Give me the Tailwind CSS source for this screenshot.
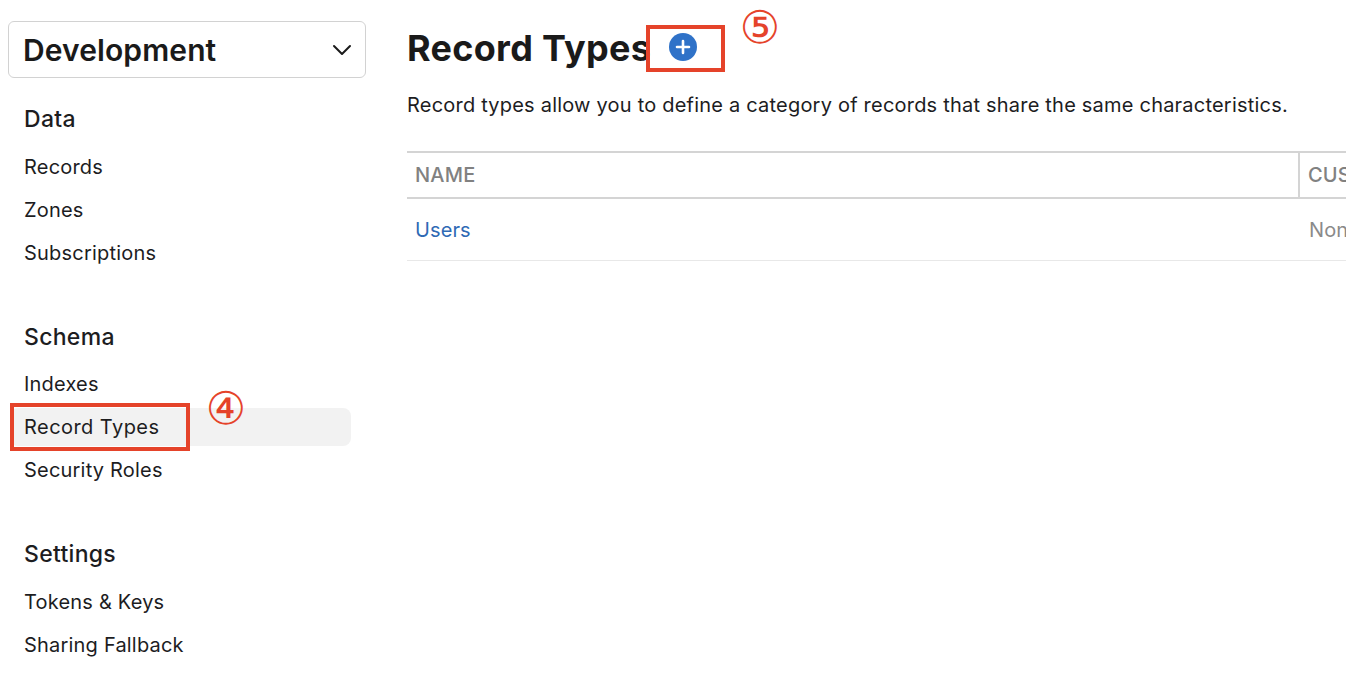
<!DOCTYPE html>
<html lang="en">
<head>
    <meta charset="UTF-8">
    <title>Record Types</title>
    <script src="https://cdn.jsdelivr.net/npm/@tailwindcss/browser@4"></script>
</head>
<body class="bg-white h-[686px] overflow-hidden font-['Inter',sans-serif] text-[#1d1d1f]">
    <div class="relative flex h-[686px] overflow-hidden">
        <!-- Sidebar -->
        <aside class="w-[407px] shrink-0 pl-2 pt-[21px]">
            <div class="flex items-center justify-between w-[358px] h-[57px] border border-[#d2d2d2] rounded-md pl-[14px] pr-[13px]">
                <span class="pt-[2px] text-[30px] font-semibold tracking-[0.1px] text-[#1a1a1a]">Development</span>
                <svg width="20" height="12" viewBox="0 0 20 12" fill="none" stroke="#1a1a1a" stroke-width="2" stroke-linecap="round" stroke-linejoin="round"><path d="M2 2l8 8 8-8"/></svg>
            </div>

            <h2 class="mt-[27px] pl-4 h-[28px] leading-[28px] text-[23px] font-medium tracking-[0.3px]">Data</h2>
            <ul class="mt-[13px] text-[20px] tracking-[0.2px]">
                <li class="h-[43px] pl-4 leading-[43px]">Records</li>
                <li class="h-[43px] pl-4 leading-[43px]">Zones</li>
                <li class="h-[43px] pl-4 leading-[43px]">Subscriptions</li>
            </ul>

            <h2 class="mt-[48px] pl-4 h-[28px] leading-[28px] text-[23px] font-medium tracking-[0.3px]">Schema</h2>
            <ul class="mt-[12px] text-[20px] tracking-[0.2px]">
                <li class="h-[43px] pl-4 leading-[43px]">Indexes</li>
                <li class="h-[43px] flex items-center">
                    <span class="w-[341px] h-[38px] mb-[2px] ml-[2px] pl-[14px] leading-[38px] tracking-[0.45px] bg-[#f2f2f2] rounded-lg">Record Types</span>
                </li>
                <li class="h-[43px] pl-4 leading-[43px]">Security Roles</li>
            </ul>

            <h2 class="mt-[48px] pl-4 h-[28px] leading-[28px] text-[23px] font-medium tracking-[0.3px]">Settings</h2>
            <ul class="mt-[13px] text-[20px] tracking-[0.2px]">
                <li class="h-[43px] pl-4 leading-[43px]">Tokens &amp; Keys</li>
                <li class="h-[43px] pl-4 leading-[43px]">Sharing Fallback</li>
            </ul>
        </aside>

        <!-- Main -->
        <main class="flex-1 min-w-0 pt-[25px]">
            <div class="flex items-center h-[46px]">
                <h1 class="text-[36px] font-bold tracking-[0.3px] text-[#1a1a1a] whitespace-nowrap">Record Types</h1>
                <svg class="ml-[18px] -mt-[2px]" width="28" height="28" viewBox="0 0 28 28">
                    <circle cx="14" cy="14" r="14" fill="#2f72c8"/>
                    <path d="M14 8v12M8 14h12" stroke="#fff" stroke-width="2.6" stroke-linecap="round"/>
                </svg>
            </div>
            <p class="mt-[20px] h-[28px] leading-[28px] text-[20px] tracking-[0.21px] whitespace-nowrap">Record types allow you to define a category of records that share the same characteristics.</p>

            <!-- Table -->
            <div class="mt-[32px] w-[1100px]">
                <div class="flex h-[48px] border-y-2 border-[#d4d4d4] text-[20px] font-medium text-[#818181] tracking-[0.2px]">
                    <div class="w-[893px] pl-2 leading-[45px] border-r-2 border-[#d4d4d4]">NAME</div>
                    <div class="pl-2 leading-[45px]">CUSTOM INDEXES</div>
                </div>
                <div class="flex h-[62px] items-center border-b border-[#e8e8e8] text-[20px] tracking-[0.1px]">
                    <div class="w-[893px] pl-2 text-[#2f6ab5]">Users</div>
                    <div class="pl-[9px] text-[#8a8a8a]">None</div>
                </div>
            </div>
        </main>

        <!-- Annotations -->
        <div class="absolute left-[10px] top-[403px] w-[180px] h-[48px] border-[4px] border-[#e5432a]"></div>
        <div class="absolute left-[646px] top-[25px] w-[79px] h-[47px] border-[4px] border-[#e5432a]"></div>
        <span class="absolute left-[205px] top-[388px] w-[42px] h-[42px] leading-[42px] text-center text-[45px] text-[#e5432a] font-['DejaVu_Sans',sans-serif]">④</span>
        <span class="absolute left-[739px] top-[7px] w-[42px] h-[42px] leading-[42px] text-center text-[45px] text-[#e5432a] font-['DejaVu_Sans',sans-serif]">⑤</span>
    </div>
</body>
</html>
